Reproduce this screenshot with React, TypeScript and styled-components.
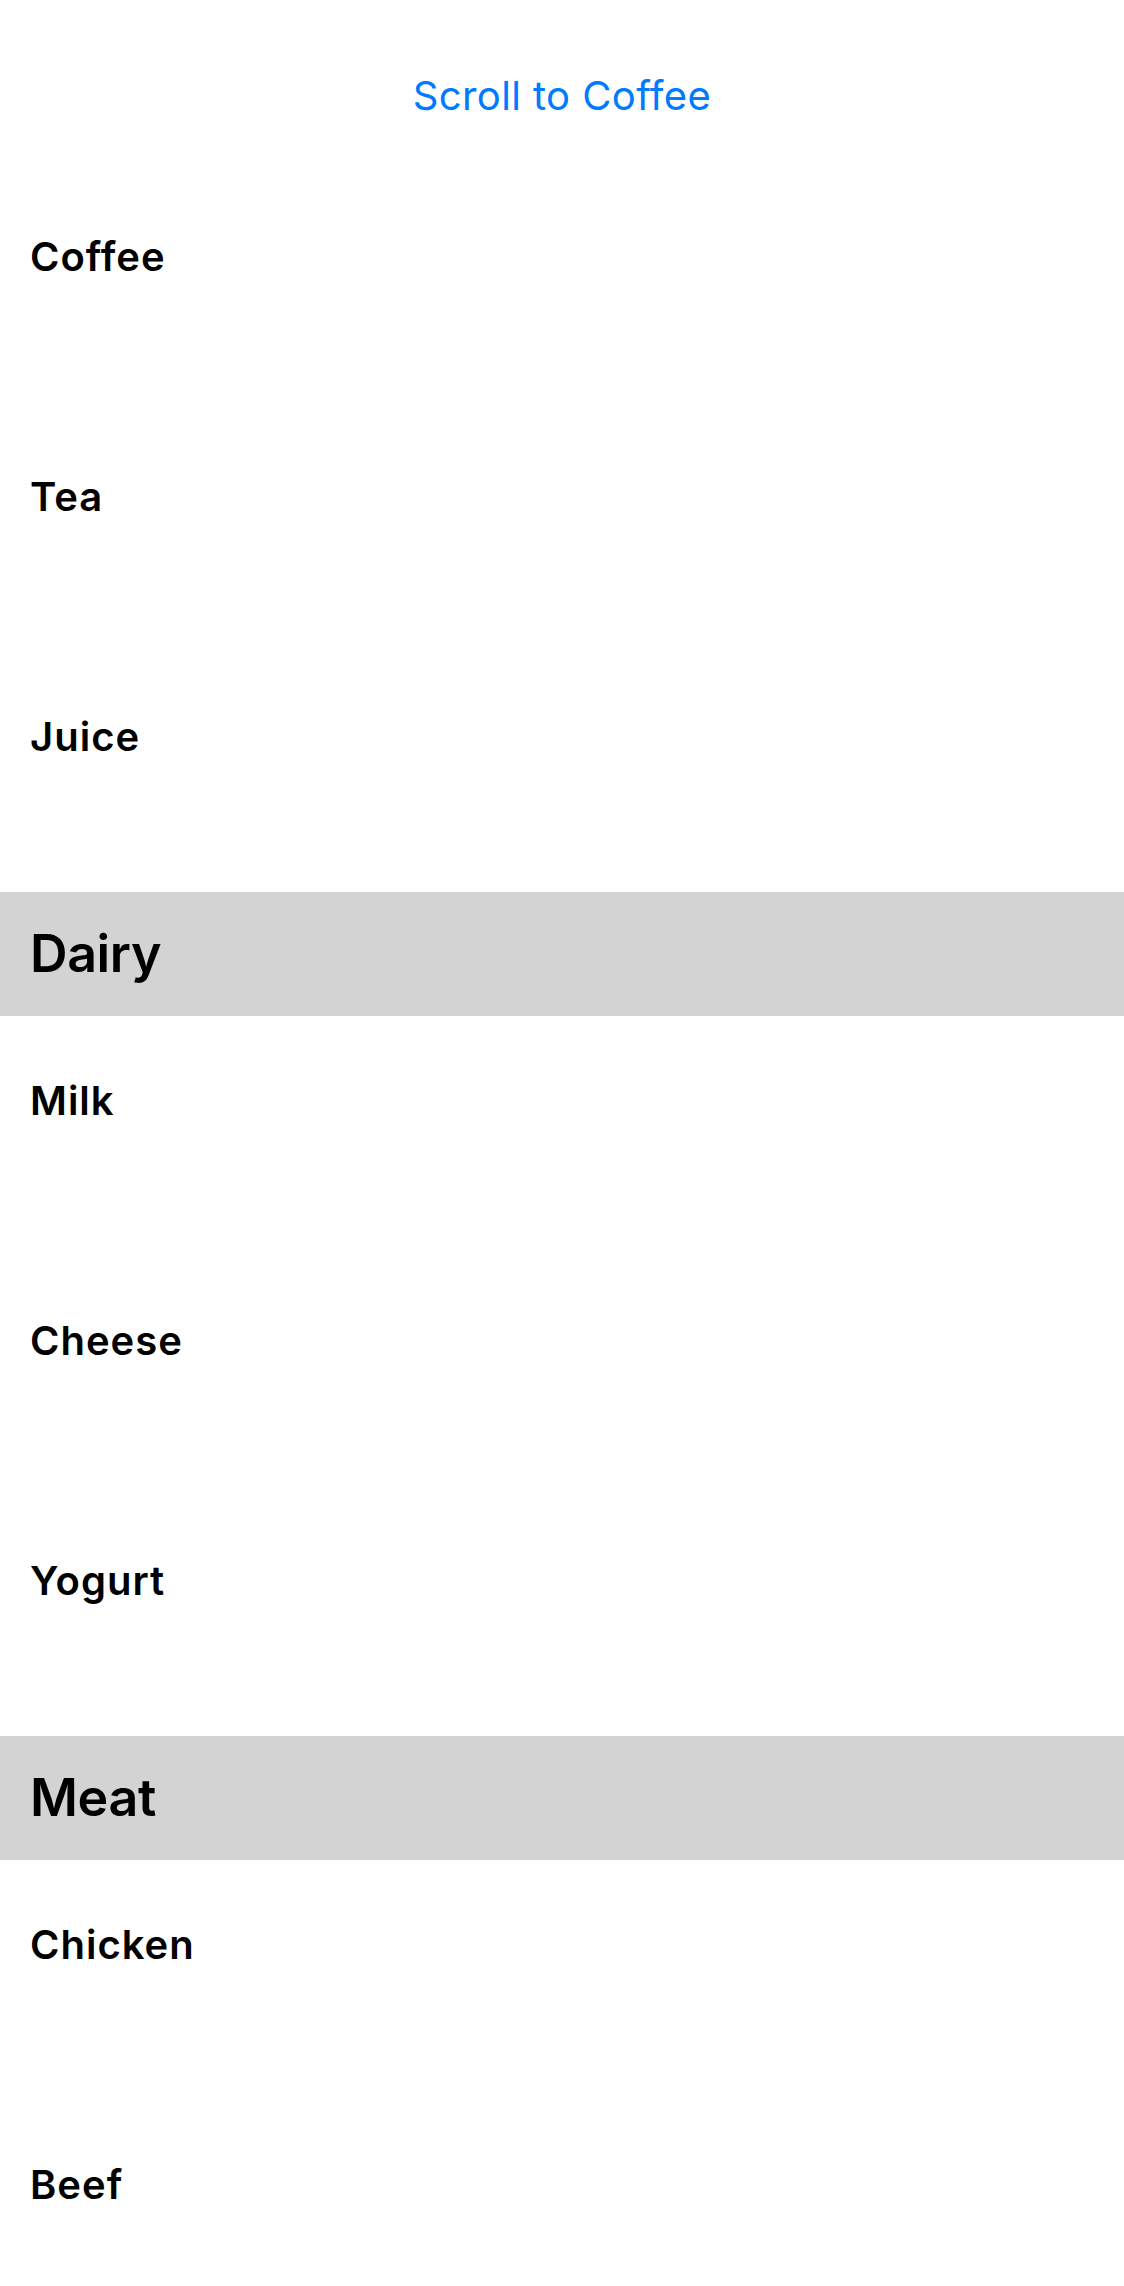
import React from "react";
import styled, { createGlobalStyle } from "styled-components";

const Global = createGlobalStyle`
  html, body {
    margin: 0;
    padding: 0;
    background: #ffffff;
  }
  body {
    font-family: Inter, "Noto Sans", "Liberation Sans", sans-serif;
    -webkit-font-smoothing: antialiased;
  }
`;

const Screen = styled.div`
  width: 1124px;
  height: 2286px;
  overflow: hidden;
  background: #ffffff;
  display: flex;
  flex-direction: column;
`;

const TopBar = styled.div`
  height: 172px;
  box-sizing: border-box;
  padding-top: 66px;
  display: flex;
  justify-content: center;
  align-items: flex-start;
  flex-shrink: 0;
`;

const LinkButton = styled.button`
  border: none;
  background: none;
  padding: 0;
  margin: 0;
  font-family: Inter, "Noto Sans", sans-serif;
  font-size: 40px;
  font-weight: 400;
  line-height: 60px;
  letter-spacing: 0.4px;
  color: #007aff;
  cursor: pointer;
`;

const List = styled.div`
  display: flex;
  flex-direction: column;
  flex-shrink: 0;
`;

const SectionHeader = styled.div`
  height: 124px;
  box-sizing: border-box;
  padding: 0 0 2px 30px;
  display: flex;
  align-items: center;
  background: #d3d3d3;
  font-size: 52px;
  font-weight: 600;
  color: #000000;
  letter-spacing: -0.4px;
`;

const Row = styled.div`
  height: 240px;
  box-sizing: border-box;
  padding: 60px 0 0 30px;
  font-size: 40px;
  font-weight: 600;
  line-height: 50px;
  color: #000000;
  letter-spacing: 1px;
`;

type Section = { title: string; items: string[]; showHeader: boolean };

const sections: Section[] = [
  { title: "Drinks", items: ["Coffee", "Tea", "Juice"], showHeader: false },
  { title: "Dairy", items: ["Milk", "Cheese", "Yogurt"], showHeader: true },
  { title: "Meat", items: ["Chicken", "Beef"], showHeader: true },
];

export default function App() {
  return (
    <>
      <Global />
      <Screen>
        <TopBar>
          <LinkButton type="button">Scroll to Coffee</LinkButton>
        </TopBar>
        <List>
          {sections.map((s) => (
            <React.Fragment key={s.title}>
              {s.showHeader && <SectionHeader>{s.title}</SectionHeader>}
              {s.items.map((item) => (
                <Row key={item}>{item}</Row>
              ))}
            </React.Fragment>
          ))}
        </List>
      </Screen>
    </>
  );
}
